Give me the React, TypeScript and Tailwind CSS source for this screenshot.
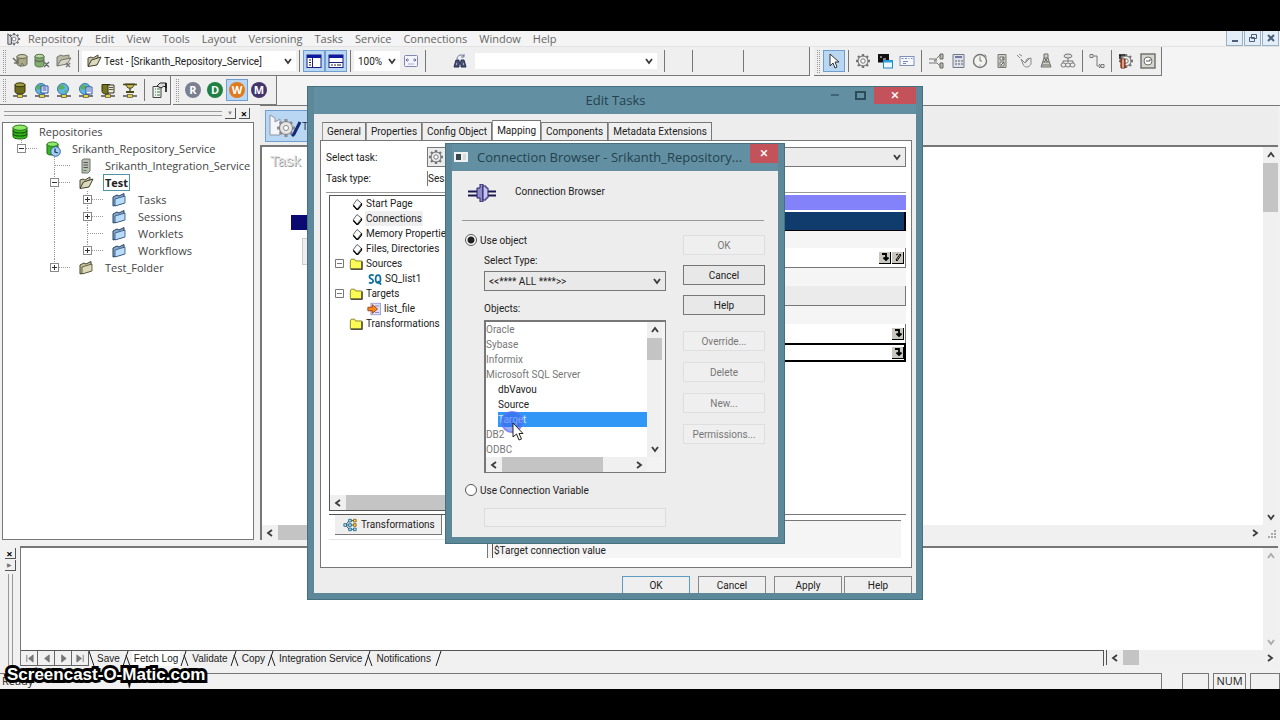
import React, { useState } from 'react';
import clsx from 'clsx';

const MENUS = ['Repository', 'Edit', 'View', 'Tools', 'Layout', 'Versioning', 'Tasks', 'Service', 'Connections', 'Window', 'Help'];

const TASK_TABS = ['General', 'Properties', 'Config Object', 'Mapping', 'Components', 'Metadata Extensions'];

const OUTPUT_TABS = ['Save', 'Fetch Log', 'Validate', 'Copy', 'Integration Service', 'Notifications'];

type Guide = 'line' | 'tee' | 'plus' | 'minus' | 'last-plus' | 'last-minus' | 'none';

const REPO_TREE: { label: string; icon: IconName; guides: Guide[]; current?: boolean }[] = [
    { label: 'Repositories', icon: 'db', guides: [] },
    { label: 'Srikanth_Repository_Service', icon: 'dbClock', guides: ['last-minus'] },
    { label: 'Srikanth_Integration_Service', icon: 'server', guides: ['none', 'tee'] },
    { label: 'Test', icon: 'folderOpen', guides: ['none', 'minus'], current: true },
    { label: 'Tasks', icon: 'folderBlue', guides: ['none', 'line', 'plus'] },
    { label: 'Sessions', icon: 'folderBlue', guides: ['none', 'line', 'plus'] },
    { label: 'Worklets', icon: 'folderBlue', guides: ['none', 'line', 'tee'] },
    { label: 'Workflows', icon: 'folderBlue', guides: ['none', 'line', 'last-plus'] },
    { label: 'Test_Folder', icon: 'folderTan', guides: ['none', 'last-plus'] }
];

const MAPPING_TREE: { label: string; icon: IconName; level: 'page' | 'folder' | 'child'; open?: boolean; current?: boolean }[] = [
    { label: 'Start Page', icon: 'page', level: 'page' },
    { label: 'Connections', icon: 'page', level: 'page', current: true },
    { label: 'Memory Properties', icon: 'page', level: 'page' },
    { label: 'Files, Directories', icon: 'page', level: 'page' },
    { label: 'Sources', icon: 'folderYellow', level: 'folder', open: true },
    { label: 'SQ_list1', icon: 'sq', level: 'child' },
    { label: 'Targets', icon: 'folderYellow', level: 'folder', open: true },
    { label: 'list_file', icon: 'target', level: 'child' },
    { label: 'Transformations', icon: 'folderYellow', level: 'folder' }
];

const OBJECTS = [
    { label: 'Oracle', group: true },
    { label: 'Sybase', group: true },
    { label: 'Informix', group: true },
    { label: 'Microsoft SQL Server', group: true },
    { label: 'dbVavou', group: false },
    { label: 'Source', group: false },
    { label: 'Target', group: false },
    { label: 'DB2', group: true },
    { label: 'ODBC', group: true }
];

const gear = (
    <>
        <path d="M8 1v3M8 12v3M1 8h3M12 8h3M3 3l2 2M11 11l2 2M13 3l-2 2M5 11l-2 2" stroke="#777" strokeWidth="2.4" />
        <circle cx="8" cy="8" r="5" fill="#eee" stroke="#6a6a6a" />
        <circle cx="8" cy="8" r="2.2" fill="#fff" stroke="#777" />
    </>
);

const netBase = (
    <>
        <path d="M1 14h14" stroke="#444" strokeWidth="1.4" />
        <rect x="5.5" y="12.5" width="5" height="3" fill="#e9d23a" stroke="#555" strokeWidth=".7" />
    </>
);

const globe = (
    <>
        <circle cx="7" cy="7" r="5.5" fill="#5fb6e0" stroke="#3a7698" />
        <path d="M3 4q3-2 5 0t-1 3-4 0zM8 9l3-1-1 3z" fill="#5fae5a" />
    </>
);

const ICONS = {
    app: <>{gear}<path d="M1 2l4 4v8H1z" fill="#ccd5e2" stroke="#444" /></>,
    db: (
        <>
            <path d="M1 3.5v9c0 1.5 3 2.5 7 2.5s7-1 7-2.5v-9" fill="#35b81c" stroke="#1f6414" />
            <path d="M1 6.5c0 1.5 3 2.5 7 2.5s7-1 7-2.5M1 9.5C1 11 4 12 8 12s7-1 7-2.5" stroke="#175010" strokeWidth="1.2" fill="none" />
            <ellipse cx="8" cy="3.7" rx="7" ry="2.6" fill="#8fe86a" stroke="#2a7a18" />
        </>
    ),
    dbClock: (
        <>
            <path d="M2 3v9c0 1.5 2 2 5 2s6-1 6-2V3" fill="#35b81c" stroke="#1f6414" />
            <ellipse cx="7.5" cy="3.2" rx="5.5" ry="2.2" fill="#8fe86a" stroke="#2a7a18" />
            <circle cx="10.5" cy="10.5" r="4.8" fill="#a9cdf0" stroke="#2b5c9b" />
            <path d="M10 7.5v3.5l3 1" stroke="#123a75" strokeWidth="1.3" fill="none" />
        </>
    ),
    server: (
        <>
            <path d="M4 2l2-1h6v12l-2 2H4z" fill="#b9bfb6" stroke="#70756d" />
            <path d="M5.5 4.5H10M5.5 7H10M5.5 9.5H10" stroke="#555" />
            <path d="M5.5 12.5h3" stroke="#3d8a3d" />
        </>
    ),
    folderOpen: (
        <>
            <path d="M2 13V5l3-1 2 1 5-3v4" fill="#c9c6a4" stroke="#4a4a3c" />
            <path d="M2 13.5L5.5 7 15 4l-4 8z" fill="#dedbbd" stroke="#3c3c30" />
        </>
    ),
    folderTan: (
        <>
            <path d="M2 14V5l4-2 2 1 5-2.5V11z" fill="#c4c19c" stroke="#45452f" />
            <path d="M4 14V7l10-3v7z" fill="#dcd9b8" stroke="#45452f" strokeWidth=".8" />
        </>
    ),
    folderBlue: (
        <>
            <path d="M2 14V5l4-2 2 1 5-2.5V11z" fill="#87a9cf" stroke="#24405f" />
            <path d="M4 14V7l10-3v7z" fill="#b9dcfa" stroke="#2c4c72" strokeWidth=".8" />
        </>
    ),
    folderYellow: (
        <>
            <path d="M1.5 13.5v-9l1-2h4l1 2h7v9z" fill="#fdfb55" stroke="#7d7a1c" />
            <path d="M15 5v9H2" stroke="#222" strokeWidth="1.2" fill="none" />
        </>
    ),
    page: (
        <>
            <path d="M8 2l6 5-6 8-5-6z" fill="#fff" stroke="#333" />
            <path d="M14 7v2.5L8.5 16 3 10" stroke="#000" strokeWidth="1.6" fill="none" />
        </>
    ),
    sq: (
        <>
            <path d="M6.5 4C3 2.5 1 4 2 6.5c1 1.5 4 1.5 4 4C5.5 13 3 13 1 12" stroke="#0d6d9c" strokeWidth="2" fill="none" />
            <ellipse cx="11.5" cy="8" rx="2.8" ry="4.5" stroke="#0d6d9c" strokeWidth="2" fill="none" />
            <path d="M11 10.5l4 4" stroke="#0d6d9c" strokeWidth="2" />
        </>
    ),
    target: (
        <>
            <rect x="4.5" y="1.5" width="11" height="13" fill="#dfe1f7" stroke="#9a9cd0" />
            <path d="M9 4.5h5M9 12h5" stroke="#8184c4" />
            <path d="M1 6h5V3l6 5-6 5v-3H1z" fill="#f58a1f" stroke="#a1390b" />
        </>
    ),
    dbArrow: (
        <>
            <path d="M5 3v8c0 1 2 2 5 2s5-1 5-2V3" fill="#a9ab87" stroke="#64664f" />
            <ellipse cx="10" cy="3.5" rx="5" ry="2" fill="#c8caa9" stroke="#64664f" />
            <path d="M1 5l5 5M6 6v4H2" stroke="#6f7164" strokeWidth="1.5" fill="none" />
            <path d="M8 14l2-4 2 2" stroke="#777" fill="none" />
        </>
    ),
    dbCut: (
        <>
            <path d="M1 3v9c0 1 2 2 4.5 2s4.5-1 4.5-2V3" fill="#7fae6a" stroke="#55714a" />
            <ellipse cx="5.5" cy="3.2" rx="4.5" ry="1.9" fill="#b7d8a6" stroke="#55714a" />
            <path d="M1 7c2 2 7 2 9 0M10 9l5 5M15 9l-5 5" stroke="#666" strokeWidth="1.3" fill="none" />
        </>
    ),
    folderCut: (
        <>
            <path d="M1 13V4l4-2 2 1 6-1v4" fill="#b9b9a6" stroke="#77776a" />
            <path d="M1 13l4-6 10-2-4 6z" fill="#d6d6c8" stroke="#77776a" />
            <path d="M10 10l4 4M14 10l-4 4" stroke="#777" strokeWidth="1.4" />
        </>
    ),
    paneLeft: (
        <>
            <rect x="1" y="2" width="14" height="12.5" fill="#fff" stroke="#1a1f8a" />
            <path d="M1 3.5h14" stroke="#101a9c" strokeWidth="3" />
            <path d="M6.5 5v9" stroke="#1a1f8a" />
            <path d="M3 7h2M3 9.5h2M3 12h2" stroke="#222" />
        </>
    ),
    paneBottom: (
        <>
            <rect x="1" y="2" width="14" height="12.5" fill="#fff" stroke="#1a1f8a" />
            <path d="M1 3.5h14" stroke="#101a9c" strokeWidth="3" />
            <path d="M1 9.5h14" stroke="#1a1f8a" />
            <path d="M3 12h2M6 12h2M9 12h4" stroke="#222" />
        </>
    ),
    fit: (
        <>
            <rect x="1.5" y="2.5" width="13" height="11" rx="1" fill="#f3f4fd" stroke="#8386ad" />
            <path d="M3 7h3M10 7h3M4.5 5.5L3 7l1.5 1.5M11.5 5.5L13 7l-1.5 1.5" stroke="#666a96" fill="none" />
            <path d="M5 11h6" stroke="#aaaed4" />
        </>
    ),
    find: (
        <>
            <path d="M5 6c0-4 5-5 7-3M12 1v3H9" stroke="#6d74a0" fill="none" />
            <path d="M4 7h3v2h2V7h3l2 7H9v-3H7v3H2z" fill="#4b5478" stroke="#222c50" />
            <path d="M4 11h1M11 11h1" stroke="#fff" />
        </>
    ),
    dbNet: (
        <>
            {netBase}
            <path d="M3 2.5v7C3 11 5 12 8 12s5-1 5-2.5v-7" fill="#6c6a1c" stroke="#35340f" />
            <ellipse cx="8" cy="2.8" rx="5" ry="2" fill="#a09d3d" stroke="#35340f" />
        </>
    ),
    globeDocs: <>{netBase}{globe}<path d="M7 4h7v7H7z" fill="#e8efff" stroke="#2c4fa5" /><path d="M8.5 6h4M8.5 8h4" stroke="#2c4fa5" /></>,
    globeNet: <>{netBase}{globe}</>,
    globeDoc: <>{netBase}{globe}<path d="M8 5h6v7H8z" fill="#fff" stroke="#2c4fa5" /><path d="M9 7h4M9 9h4" stroke="#3a62c4" /></>,
    dbDoc: (
        <>
            {netBase}
            <path d="M2 2.5v7C2 11 4 12 6 12s4-1 4-2.5v-7z" fill="#77741f" stroke="#35340f" />
            <path d="M8 3h6v8H8z" fill="#eee8c6" stroke="#333" />
            <path d="M9 5.5h4M9 7.5h4" stroke="#555" />
        </>
    ),
    flowNet: (
        <>
            {netBase}
            <path d="M3 2h10l-3 4H6z" fill="#cfc658" stroke="#4c4a1b" />
            <path d="M1 2.5h14M8 6v4" stroke="#4c4a1b" strokeWidth="1.4" />
            <path d="M4 10h8" stroke="#4c4a1b" strokeWidth="2" />
        </>
    ),
    propSheet: (
        <>
            <path d="M2 4.5h8v11H2z" fill="#f2f5ee" stroke="#444" />
            <path d="M4 7h1M6 7h3M4 10h1M6 10h3M4 13h1M6 13h3" stroke="#38724a" />
            <path d="M6 4l3-3h6v5l-2-2-3 2z" fill="#ddd" stroke="#222" />
            <path d="M15 1v9" stroke="#111" strokeWidth="1.6" />
        </>
    ),
    pointer: <path d="M4 1v12l3-3 2 5 2-1-2-5h4z" fill="#fff" stroke="#333" />,
    gear,
    command: (
        <>
            <rect x="1" y="1" width="11" height="8.5" fill="#111" />
            <path d="M3 4h2M6 6h3" stroke="#eee" />
            <rect x="6.5" y="7.5" width="9" height="7.5" fill="#eef8ff" stroke="#1e8ac7" />
            <path d="M6.5 8.5h9" stroke="#2ea0e0" strokeWidth="2" />
        </>
    ),
    email: (
        <>
            <rect x="1" y="3.5" width="14" height="9" fill="#f5f8ff" stroke="#7f8fb8" />
            <path d="M2.5 5.5h2M6 5.5h2M9.5 5.5h1M12 5.5h1.5M4 8.5h5M4 10.5h3" stroke="#7787b5" />
        </>
    ),
    decision: (
        <>
            <path d="M1 6h8l-3 2h3M1 10h8M9 5l3-3M9 10l3 3" stroke="#777" fill="none" />
            <path d="M12 1h3v5h-3zM12 10h3v5h-3z" fill="#b9bab0" stroke="#666" />
        </>
    ),
    calc: (
        <>
            <path d="M3 1.5h11v13H3z" fill="#dfe0e6" stroke="#75788c" />
            <path d="M5 4h7" stroke="#7378a5" strokeWidth="2" />
            <path d="M5 8h2M8 8h2M11 8h2M5 11h2M8 11h2M11 11h2" stroke="#85889c" strokeWidth="1.5" />
        </>
    ),
    clock: (
        <>
            <circle cx="8" cy="8" r="6.5" fill="#f3f3ee" stroke="#777" strokeWidth="1.4" />
            <path d="M8 3.5V8M8 8h2M12.5 1.5l2 2" stroke="#777" fill="none" />
            <circle cx="8" cy="12" r=".6" fill="#777" />
        </>
    ),
    device: (
        <>
            <path d="M4 1.5h8v13H4z" fill="#cfd0c9" stroke="#76786f" />
            <path d="M6 4h4v3H6zM6 9h4v4H6z" fill="#f2f2ee" stroke="#777" />
            <path d="M9 4v3M7 12l3-3" stroke="#555" />
        </>
    ),
    wait: (
        <>
            <path d="M1 2l3 3M3 1l3 2M5 6l2 5c1 4 6 4 8 0V5l-4 1-2 4z" fill="#ecece6" stroke="#888" />
            <path d="M9 10l4-4" stroke="#888" />
        </>
    ),
    tower: (
        <>
            <path d="M6 1h4v4H6zM6 5L3 14h10l-3-9" fill="#cfcfc8" stroke="#6e6e6a" />
            <path d="M5 9h6M4 12h8M6 5l4 4M10 5L6 9" stroke="#6e6e6a" />
        </>
    ),
    links: (
        <>
            <ellipse cx="8" cy="3" rx="4" ry="2" fill="#ddd" stroke="#777" />
            <path d="M8 5v4M3 10V8h10v2" stroke="#777" fill="none" />
            <ellipse cx="3.5" cy="12" rx="2.5" ry="2" fill="#eee" stroke="#777" />
            <ellipse cx="8" cy="12" rx="2.5" ry="2" fill="#eee" stroke="#777" />
            <ellipse cx="12.5" cy="12" rx="2.5" ry="2" fill="#eee" stroke="#777" />
        </>
    ),
    connect: (
        <>
            <path d="M1 1.5h3v3H1zM12 11.5h3v3h-3zM4 3h4v10h4" fill="none" stroke="#777" />
            <path d="M10 11l2 2-2 2" stroke="#777" fill="none" />
        </>
    ),
    taskTool: (
        <>
            {gear}
            <path d="M1 2h6M2 2v4" stroke="#111" strokeWidth="1.6" />
            <path d="M3 6h4v9H3z" fill="#d65f3a" stroke="#5e1f0c" />
            <path d="M5 6v9" stroke="#f0dcc8" />
        </>
    ),
    monitor: (
        <>
            <rect x="1" y="1" width="14" height="14" fill="#d5d5cf" stroke="#6c6c68" strokeWidth="1.4" />
            <circle cx="8" cy="8" r="4" fill="#fff" stroke="#6c6c68" />
            <path d="M6 8h4V6" stroke="#555" fill="none" />
        </>
    ),
    nodes: (
        <>
            <path d="M3 8l4-5M3 8h5M3 8l4 5M8 3h5M8 8h5M8 13h4" stroke="#333" />
            <path d="M1 6.5h3v3H1zM6.5 1.5h3v3h-3zM6.5 6.5h3v3h-3zM6.5 11.5h3v3h-3zM12 11.5h3v3h-3z" fill="#bfe4f5" stroke="#17678f" />
            <path d="M12 1.5h3v3h-3zM12 6.5h3v3h-3z" fill="#ffd84a" stroke="#8a6510" />
        </>
    )
};

type IconName = keyof typeof ICONS;

function Icon({ name, className = 'size-4' }: { name: IconName; className?: string }) {
    return (
        <svg viewBox="0 0 16 16" fill="none" aria-hidden="true" className={clsx('shrink-0', className)}>
            {ICONS[name]}
        </svg>
    );
}

const CHEVRONS = {
    up: 'M1 6l3-4 3 4',
    down: 'M1 2l3 4 3-4',
    left: 'M6 1L2 4l4 3',
    right: 'M2 1l4 3-4 3'
};

function Chevron({ dir, className = 'text-[#3c3c3c]' }: { dir: keyof typeof CHEVRONS; className?: string }) {
    return (
        <svg viewBox="0 0 8 8" aria-hidden="true" className={clsx('size-2 shrink-0', className)}>
            <path d={CHEVRONS[dir]} fill="none" stroke="currentColor" strokeWidth="1.8" />
        </svg>
    );
}

function ToolButton({ icon, active, label }: { icon: IconName; active?: boolean; label: string }) {
    return (
        <button
            type="button"
            aria-label={label}
            className={clsx('flex h-[22px] w-[22px] shrink-0 items-center justify-center border', active ? 'border-[#6f9fd0] bg-[#b9d6f3]' : 'border-transparent')}
        >
            <Icon name={icon} />
        </button>
    );
}

const Gripper = () => <div className="mx-[3px] h-[23px] w-[3px] shrink-0 border-x border-dotted border-[#999]" />;

const Separator = () => <div className="mx-[3px] h-[22px] w-px shrink-0 bg-[#777]" />;

function Toolbar({ children }: { children: React.ReactNode }) {
    return <div className="flex h-[29px] items-center border-r border-b border-[#777] bg-[#efefef]">{children}</div>;
}

function DropDown({ label, id, children, className, boxClass }: { label: string; id?: string; children: React.ReactNode; className?: string; boxClass?: string }) {
    return (
        <div className={clsx('grid items-center', boxClass)}>
            <select id={id} aria-label={label} className={clsx('col-start-1 row-start-1 h-full w-full appearance-none outline-none', className)}>
                {children}
            </select>
            <Chevron dir="down" className="pointer-events-none col-start-1 row-start-1 mr-1 justify-self-end text-[#3c3c3c]" />
        </div>
    );
}

function ScrollY({ className, thumb, arrow }: { className?: string; thumb?: string; arrow?: string }) {
    return (
        <div className={clsx('flex w-[15px] shrink-0 flex-col items-center bg-[#f0f0f0] py-1', className)}>
            <Chevron dir="up" className={arrow} />
            <div className="mt-1 flex w-full flex-1 flex-col">{thumb && <div className={clsx('w-full bg-[#c4c4c4]', thumb)} />}</div>
            <Chevron dir="down" className={arrow} />
        </div>
    );
}

function ScrollX({ className, thumb }: { className?: string; thumb?: string }) {
    return (
        <div className={clsx('flex h-[15px] shrink-0 items-center bg-[#f0f0f0] px-1', className)}>
            <Chevron dir="left" />
            <div className="ml-1 flex h-full flex-1">{thumb && <div className={clsx('h-full bg-[#c4c4c4]', thumb)} />}</div>
            <Chevron dir="right" />
        </div>
    );
}

function TreeGuide({ kind }: { kind: Guide }) {
    const last = kind.startsWith('last');
    const box = kind.endsWith('plus') || kind.endsWith('minus');
    return (
        <svg viewBox="0 0 33 17" aria-hidden="true" className="h-[17px] w-[33px] shrink-0">
            {kind !== 'none' && <path d={last ? 'M16.5 0v8' : 'M16.5 0v17'} stroke="#999" strokeDasharray="1 1" />}
            {kind !== 'none' && kind !== 'line' && <path d="M17 8.5h17" stroke="#999" strokeDasharray="1 1" />}
            {box && <rect x="12.5" y="4.5" width="8" height="8" fill="#fff" stroke="#8a8a8a" />}
            {box && <path d={kind.endsWith('plus') ? 'M14 8.5h5M16.5 6v5' : 'M14 8.5h5'} stroke="#333" />}
        </svg>
    );
}

function RepositoryPane() {
    return (
        <aside className="flex w-[255px] shrink-0 flex-col pr-px pl-0.5">
            <div className="flex h-[17px] items-center gap-[3px] pr-1 pl-0.5">
                <div className="h-[5px] flex-1 border-y border-[#9a9a9a]" />
                <button type="button" aria-label="Pane menu" className="flex size-[11px] items-center justify-center border-r border-b border-[#555] bg-[#f0f0f0] text-[6px] text-[#888]">▼</button>
                <button type="button" aria-label="Close pane" className="flex size-[11px] items-center justify-center border-r border-b border-[#555] bg-[#f0f0f0] text-[11px] leading-none font-bold text-black">×</button>
            </div>
            <ul className="flex-1 border border-[#777] bg-white pl-0.5">
                {REPO_TREE.map((node) => (
                    <li key={node.label} className="flex h-[17px] items-center">
                        {node.guides.map((g, i) => (
                            <TreeGuide key={i} kind={g} />
                        ))}
                        <Icon name={node.icon} className="mr-[9px] ml-[7px] size-4" />
                        <span className={clsx('border px-px leading-[15px] whitespace-nowrap', node.current ? 'border-[#4f93a8] font-bold text-[#222]' : 'border-transparent')}>{node.label}</span>
                    </li>
                ))}
            </ul>
        </aside>
    );
}

function Workspace() {
    return (
        <main className="ml-[5px] flex min-w-0 flex-1 flex-col border-t border-[#777] pr-0.5">
            <div className="flex h-[39px] items-center bg-[#ededed] px-[5px]">
                <div className="flex h-8 w-[110px] items-center border border-[#6f9fd0] bg-[#b9d6f3]">
                    <svg viewBox="0 0 36 30" fill="none" aria-hidden="true" className="h-[30px] w-9">
                        <path d="M4 4l5 3v4l5-3v16H4z" fill="#f4f6fa" stroke="#8d97a8" />
                        <path d="M20 8v4M20 22v4M11 17h4M25 17h4M14 11l3 3M23 20l3 3M26 11l-3 3M14 23l3-3" stroke="#8b8b8b" strokeWidth="3" />
                        <circle cx="20" cy="17" r="6.5" fill="#e4e4e4" stroke="#7d7d7d" />
                        <circle cx="20" cy="17" r="2.5" fill="#fff" stroke="#8b8b8b" />
                        <path d="M34 11l-6 12-2 2" stroke="#152a7a" strokeWidth="3" />
                    </svg>
                    <span className="text-[#1c2b50]">Task</span>
                </div>
            </div>
            <div className="flex flex-1 flex-col border-t-2 border-l-2 border-[#777] bg-white">
                <div className="flex flex-1">
                    <div className="flex-1 pl-2">
                        <div className="font-['Liberation_Sans'] text-[15px] leading-7 text-[#e4e4e4] [text-shadow:1px_1px_0_#999]">Task</div>
                        <div className="mt-10 ml-[21px] h-[15px] w-20 bg-[#0a0a70]" />
                        <div className="mt-2 ml-8 h-[27px] w-20 border border-[#ccc] bg-[#eee]" />
                    </div>
                    <ScrollY thumb="h-[49px]" />
                </div>
                <div className="flex bg-[#f0f0f0]">
                    <ScrollX className="flex-1" thumb="w-1/2" />
                    <svg viewBox="0 0 15 15" aria-hidden="true" className="size-[15px]">
                        <path d="M5 12h2M8 12h2M11 12h2M8 9h2M11 9h2M11 6h2" stroke="#aaa" strokeWidth="2" />
                    </svg>
                </div>
            </div>
        </main>
    );
}

const NAV_ARROWS = [
    { label: 'First', d: 'M2 1v8M9 1L4 5l5 4z' },
    { label: 'Previous', d: 'M8 1L3 5l5 4z' },
    { label: 'Next', d: 'M3 1l5 4-5 4z' },
    { label: 'Last', d: 'M1 1l5 4-5 4zM8 1v8' }
];

function TabSlant({ d }: { d: string }) {
    return (
        <svg viewBox="0 0 10 15" aria-hidden="true" className="h-[15px] w-2.5 shrink-0">
            <path d={d} fill="none" stroke="#222" />
        </svg>
    );
}

function OutputPane() {
    const [tab, setTab] = useState('Fetch Log');
    return (
        <section className="mt-1 flex h-[122px] shrink-0 pr-0.5">
            <div className="flex w-5 shrink-0 flex-col items-center gap-px pt-1">
                <button type="button" aria-label="Close output" className="flex size-[11px] items-center justify-center border-r border-b border-[#555] text-[11px] leading-none font-bold text-black">×</button>
                <button type="button" aria-label="Expand output" className="flex size-[11px] items-center justify-center border-r border-b border-[#555] text-[6px] text-[#777]">▶</button>
                <div className="mt-0.5 w-[5px] flex-1 border-x border-[#9a9a9a]" />
            </div>
            <div className="mt-0.5 flex min-w-0 flex-1 flex-col border-t-2 border-l border-[#777]">
                <div className="flex flex-1 bg-white">
                    <div className="flex-1" />
                    <ScrollY arrow="text-[#aaa]" />
                </div>
                <div className="flex h-4">
                    <div className="flex min-w-0 flex-1 border-t border-r border-[#555]">
                        {NAV_ARROWS.map((nav) => (
                            <button key={nav.label} type="button" aria-label={nav.label} className="flex w-[17px] items-center justify-center border-r border-b border-[#666]">
                                <svg viewBox="0 0 10 10" className="size-[9px]">
                                    <path d={nav.d} fill="#777" stroke="#777" />
                                </svg>
                            </button>
                        ))}
                        <svg viewBox="0 0 6 15" aria-hidden="true" className="h-[15px] w-1.5 shrink-0">
                            <path d="M0 0l5 15" stroke="#222" />
                        </svg>
                        {OUTPUT_TABS.map((name) => (
                            <React.Fragment key={name}>
                                <button
                                    type="button"
                                    onClick={() => setTab(name)}
                                    className={clsx("px-0.5 font-['Liberation_Sans'] text-[10px] leading-[15px] whitespace-nowrap text-[#222]", tab === name ? 'bg-white' : 'bg-[#efefef]')}
                                >
                                    {name}
                                </button>
                                <TabSlant d={name === 'Notifications' ? 'M8 0L3 15' : 'M6 0L1 15M4 4l4 11'} />
                            </React.Fragment>
                        ))}
                    </div>
                    <ScrollX className="ml-0.5 w-[172px] border-l border-[#555]" thumb="w-4" />
                </div>
            </div>
        </section>
    );
}

function StatusBar() {
    return (
        <footer className="mt-[7px] flex h-4 shrink-0 gap-1 text-[#222]">
            <div className="flex-1 border-t border-r border-[#777] pl-0.5 leading-[14px]">Ready</div>
            <div className="ml-4 w-[27px] border border-b-0 border-[#777]" />
            <div className="w-[33px] border border-b-0 border-[#777] text-center leading-[14px]">NUM</div>
            <div className="w-[30px] border border-b-0 border-[#777]" />
        </footer>
    );
}

function GridButton({ kind }: { kind: 'open' | 'edit' }) {
    return (
        <button type="button" aria-label={kind === 'open' ? 'Open connection browser' : 'Edit value'} className="flex size-3 items-center justify-center border-r border-b border-black bg-[#c9c7be]">
            <svg viewBox="0 0 10 10" className="size-2.5">
                <path d={kind === 'open' ? 'M2 2h4v5M3.5 5.5L6 8l2.5-2.5' : 'M3 8l4-6 1 1-4 6zM3 3l2-1'} fill="none" stroke="#000" strokeWidth={kind === 'open' ? 1.8 : 1} />
            </svg>
        </button>
    );
}

function MappingTree() {
    return (
        <div className="flex h-[316px] w-[250px] flex-col border border-[#555] bg-white">
            <ul className="flex-1">
                {MAPPING_TREE.map((node) => (
                    <li key={node.label} className={clsx('flex h-[15px] items-center', node.level === 'child' ? 'pl-[37px]' : 'pl-[3px]')}>
                        {node.level !== 'child' && (
                            <span className="mr-1 flex w-3 justify-center">
                                {node.open && (
                                    <svg viewBox="0 0 9 9" className="size-[9px]">
                                        <path d="M.5.5h8v8h-8zM2 4.5h5" fill="#fff" stroke="#777" />
                                    </svg>
                                )}
                            </span>
                        )}
                        <Icon name={node.icon} className={clsx('mr-0.5', node.level === 'page' ? 'ml-0.5 size-3' : 'size-3.5', node.icon === 'sq' && 'ml-px')} />
                        <span className={clsx('px-px whitespace-nowrap text-[#222]', node.current && 'bg-[#efefef]')}>{node.label}</span>
                    </li>
                ))}
            </ul>
            <ScrollX thumb="w-2/3" />
        </div>
    );
}

function EditTasksDialog() {
    const [tab, setTab] = useState('Mapping');
    return (
        <div role="dialog" aria-label="Edit Tasks" className="absolute top-[86px] left-[307px] flex h-[514px] w-[616px] flex-col border-x-[7px] border-b-[7px] border-[#5c8899] bg-[#ededed] font-['Roboto'] text-[10px] outline outline-[#45707f] -outline-offset-1">
            <div className="flex h-7 shrink-0 items-start bg-[#628fa2] text-[#24424e]">
                <span className="w-[86px]" />
                <h2 className="flex-1 text-center font-['Open_Sans'] text-[13px] leading-7">Edit Tasks</h2>
                <div className="flex items-center">
                    <button type="button" aria-label="Minimize" className="mr-4 h-[2px] w-2 bg-[#3c6575]" />
                    <button type="button" aria-label="Maximize" className="mr-2 h-[9px] w-[11px] border-2 border-[#2d4c58]" />
                    <button type="button" aria-label="Close" className="h-[18px] w-[42px] bg-[#c4525b] text-[15px] leading-[18px] text-white">×</button>
                </div>
            </div>
            <div className="flex flex-1 flex-col pr-1 pl-1.5 text-[#222]">
                <div className="flex h-[26px] shrink-0 items-end pl-0.5" role="tablist">
                    {TASK_TABS.map((name) => (
                        <button
                            key={name}
                            type="button"
                            role="tab"
                            aria-selected={tab === name}
                            onClick={() => setTab(name)}
                            className={clsx('border border-b-0 border-l-[#999] border-[#777] px-1 leading-[17px] whitespace-nowrap', tab === name ? 'h-5 bg-white' : 'h-[18px] bg-[#efefef]')}
                        >
                            {name}
                        </button>
                    ))}
                </div>
                <div className="flex h-[428px] shrink-0 flex-col border border-[#777] bg-white px-[5px]">
                    <div className="mt-[5px] flex h-[22px] items-center">
                        <label htmlFor="task" className="w-[101px]">Select task:</label>
                        <div className="flex h-5 flex-1 items-center border border-[#777] bg-[#ececec]">
                            <Icon name="gear" />
                            <DropDown id="task" label="Select task" boxClass="h-full flex-1">
                                <option value="session" />
                            </DropDown>
                        </div>
                    </div>
                    <div className="flex h-5 items-center">
                        <span className="w-[101px]">Task type:</span>
                        <span className="border-l border-[#777]">Session</span>
                    </div>
                    <div className="mt-1 mb-0.5 h-px shrink-0 bg-[#999]" />
                    <div className="flex gap-2">
                        <div className="pl-[3px]">
                            <MappingTree />
                            <div className="mt-[3px] h-[26px] border-t border-b border-t-[#555] border-b-[#e5e5e5] pl-1.5">
                                <button type="button" className="flex h-5 items-center gap-1 border-r border-b border-[#777] bg-[#efefef] pr-1.5 pl-2">
                                    <Icon name="nodes" className="size-3.5" />
                                    Transformations
                                </button>
                            </div>
                        </div>
                        <div className="flex h-[320px] min-w-0 flex-1 flex-col border-b border-[#777]">
                            <div className="h-[15px] bg-[#8482fb]" />
                            <div className="mt-0.5 h-[19px] border-r-2 border-b border-black bg-[#0f3c6c]" />
                            <div className="h-[17px] bg-[#f5f5f5]" />
                            <div className="flex h-5 items-center justify-end gap-px border-r border-b border-[#777] pr-px">
                                <GridButton kind="open" />
                                <GridButton kind="edit" />
                            </div>
                            <div className="h-[18px] bg-[#f5f5f5]" />
                            <div className="h-5 border-r border-b border-[#777] bg-[#ebebeb]" />
                            <div className="h-[18px] bg-[#f5f5f5]" />
                            <div className="flex h-[19px] items-center justify-end border-r border-[#777] pr-px">
                                <GridButton kind="open" />
                            </div>
                            <div className="flex h-[19px] items-center justify-end border-2 border-l-0 border-black">
                                <GridButton kind="open" />
                            </div>
                        </div>
                    </div>
                    <div className="-mt-5 mr-[5px] ml-[161px] flex h-[38px] items-end border-t border-l border-[#777] bg-[#f5f5f5] pl-1">
                        <span className="border-l border-[#555] pl-px leading-[14px]">$Target connection value</span>
                    </div>
                </div>
                <div className="mt-2 flex flex-1 justify-end gap-0.5 overflow-hidden">
                    <div className="flex gap-2">
                        {['OK', 'Cancel', 'Apply'].map((name) => (
                            <button key={name} type="button" className={clsx('h-full w-[68px] border border-b-0 bg-[#efefef]', name === 'OK' ? 'border-[#5b9bc4]' : 'border-[#888]')}>
                                {name}
                            </button>
                        ))}
                    </div>
                    <button type="button" className="h-full w-[68px] border border-b-0 border-[#888] bg-[#efefef]">Help</button>
                </div>
            </div>
        </div>
    );
}

function SideButton({ name, disabled }: { name: string; disabled?: boolean }) {
    return (
        <button type="button" disabled={disabled} className={clsx('h-5 w-[82px] border', disabled ? 'border-[#dedede] bg-[#efefef] text-[#777]' : 'border-[#777] bg-[#e8e8e8] text-[#222]')}>
            {name}
        </button>
    );
}

function ConnectionBrowser() {
    const [mode, setMode] = useState('object');
    const [picked, setPicked] = useState('Target');
    return (
        <div role="dialog" aria-label="Connection Browser" className="absolute top-[143px] left-[445px] flex h-[401px] w-[340px] flex-col border-x-[7px] border-b-[7px] border-[#5c8899] bg-[#ededed] font-['Roboto'] text-[10px] text-[#222] outline outline-[#45707f] -outline-offset-1">
            <div className="flex h-7 shrink-0 items-start bg-[#628fa2] pl-0.5">
                <svg viewBox="0 0 14 10" aria-hidden="true" className="mt-[9px] h-2.5 w-3.5">
                    <path d="M0 0h14v10H0z" fill="#eef1f2" />
                    <path d="M2 2h5v6H2z" fill="#39484f" />
                    <path d="M9 2h3v6H9z" fill="#d5dadd" />
                </svg>
                <h2 className="ml-[9px] flex-1 truncate font-['Open_Sans'] text-[13px] leading-7 text-[#24424e]">Connection Browser - Srikanth_Repository...</h2>
                <button type="button" aria-label="Close" className="h-5 w-7 bg-[#c4525b] text-[15px] leading-5 text-white">×</button>
            </div>
            <div className="mr-[14px] ml-2.5 flex h-[50px] shrink-0 items-start border-b border-[#999] pt-[13px] pl-1.5">
                <svg viewBox="0 0 28 18" aria-hidden="true" className="h-[18px] w-7">
                    <path d="M0 7.5h9M0 11.5h9M19 7.5h9M19 11.5h9" stroke="#1d1850" strokeWidth="2" />
                    <path d="M9 4h3V0h3v18h-3v-4H9z" fill="#8f8cc9" stroke="#25206b" />
                    <path d="M15 2h3v2h2v10h-2v2h-3z" fill="#c5c3ec" stroke="#25206b" />
                </svg>
                <span className="ml-[19px]">Connection Browser</span>
            </div>
            <div className="flex pr-[13px] pl-[13px]">
                <div className="w-[201px]">
                    <label className="mt-[11px] flex h-4 items-center gap-[3px]">
                        <input type="radio" name="mode" checked={mode === 'object'} onChange={() => setMode('object')} className="size-3 appearance-none rounded-full border border-[#555] bg-white checked:bg-[radial-gradient(#222_0_3px,#fff_4px)]" />
                        Use object
                    </label>
                    <div className="pl-[19px]">
                        <label htmlFor="type" className="mt-[5px] block h-4">Select Type:</label>
                        <div className="mt-0.5 border border-[#777] bg-[#e9e9e9]">
                            <DropDown id="type" label="Select Type" boxClass="h-[18px]" className="pl-1">
                                <option>{'<<**** ALL ****>>'}</option>
                            </DropDown>
                        </div>
                        <div className="mt-2.5 h-4" id="objects">Objects:</div>
                        <div className="mt-[3px] flex h-[153px] flex-col border border-t-2 border-l-2 border-[#777] bg-[#f3f3f3] pr-[3px]">
                            <div className="flex flex-1 bg-white">
                                <ul role="listbox" aria-labelledby="objects" className="flex-1">
                                    {OBJECTS.map((o) => (
                                        <li
                                            key={o.label}
                                            role="option"
                                            aria-selected={picked === o.label}
                                            onClick={() => !o.group && setPicked(o.label)}
                                            className={clsx(
                                                'h-[15px] leading-[15px]',
                                                o.group ? 'text-[#777]' : 'ml-3',
                                                picked === o.label && 'bg-[#3197f7] text-[#cfe6ff]',
                                                !o.group && picked !== o.label && 'text-[#222]'
                                            )}
                                        >
                                            {o.label}
                                        </li>
                                    ))}
                                </ul>
                                <ScrollY thumb="h-[22px]" />
                            </div>
                            <ScrollX className="mr-[15px]" thumb="w-[101px]" />
                        </div>
                    </div>
                    <label className="mt-[9px] flex h-4 items-center gap-[3px]">
                        <input type="radio" name="mode" checked={mode === 'variable'} onChange={() => setMode('variable')} className="size-3 appearance-none rounded-full border border-[#555] bg-white checked:bg-[radial-gradient(#222_0_3px,#fff_4px)]" />
                        Use Connection Variable
                    </label>
                    <div className="mt-2.5 pl-[19px]">
                        <input aria-label="Connection variable" disabled className="block h-[19px] w-full border border-[#dcdcdc] bg-[#efefef]" />
                    </div>
                </div>
                <div className="mt-[14px] ml-[17px] flex flex-col gap-2.5">
                    <SideButton name="OK" disabled />
                    <SideButton name="Cancel" />
                    <SideButton name="Help" />
                    <div className="mt-1.5 flex flex-col gap-[11px]">
                        <SideButton name="Override..." disabled />
                        <SideButton name="Delete" disabled />
                        <SideButton name="New..." disabled />
                        <SideButton name="Permissions..." disabled />
                    </div>
                </div>
            </div>
        </div>
    );
}

const MODE_BUTTONS = [
    { letter: 'R', color: 'bg-[#7b7f92]' },
    { letter: 'D', color: 'bg-[#1f8045]' },
    { letter: 'W', color: 'bg-[#e07a1c]', active: true },
    { letter: 'M', color: 'bg-[#43356b]' }
];

const WINDOW_BUTTONS = [
    { label: 'Minimize', d: 'M2 8h6' },
    { label: 'Restore', d: 'M3.5 1.5h5v4h-5zM1.5 4.5h5v4h-5z' },
    { label: 'Close', d: 'M2 2l6 6M8 2L2 8' }
];

export default function App() {
    return (
        <div className="relative flex min-h-screen flex-col overflow-hidden bg-black py-[31px] font-['Open_Sans','Noto_Sans',sans-serif] text-[11px] leading-[15px] text-[#444]">
            <div className="flex flex-1 flex-col bg-[#f1f1f1]">
                <header className="shrink-0 bg-[#f4f4f4]">
                    <div className="flex h-4 items-center border-b border-[#e2e2e2] pl-[7px]">
                        <Icon name="app" className="size-3.5" />
                        <nav className="ml-[7px] flex flex-1 gap-3 leading-[14px] text-[#666]">
                            {MENUS.map((m) => (
                                <button key={m} type="button">{m}</button>
                            ))}
                        </nav>
                        <div className="flex gap-px pr-px">
                            {WINDOW_BUTTONS.map((b) => (
                                <button key={b.label} type="button" aria-label={b.label} className="flex h-[15px] w-[17px] items-center justify-center border-x border-b border-[#9ab0c4] bg-[#e4eef8]">
                                    <svg viewBox="0 0 10 10" className="size-2.5">
                                        <path d={b.d} fill="none" stroke="#4d5f78" strokeWidth={b.label === 'Restore' ? 1 : 2} />
                                    </svg>
                                </button>
                            ))}
                        </div>
                    </div>
                    <div className="flex gap-1">
                        <Toolbar>
                            <Gripper />
                            <ToolButton icon="dbArrow" label="Connect" />
                            <ToolButton icon="dbCut" label="Disconnect" />
                            <ToolButton icon="folderCut" label="Close folder" />
                            <Separator />
                            <div className="flex h-5 w-[214px] items-center bg-white pl-1">
                                <Icon name="folderOpen" />
                                <DropDown label="Folder" boxClass="h-full flex-1" className="pl-0.5 font-['Roboto'] text-[10px] text-[#222]">
                                    <option>Test - [Srikanth_Repository_Service]</option>
                                </DropDown>
                            </div>
                            <Separator />
                            <ToolButton icon="paneLeft" label="Navigator" active />
                            <ToolButton icon="paneBottom" label="Output" active />
                            <Separator />
                            <DropDown label="Zoom" boxClass="h-5 w-[46px] bg-white" className="pl-1 font-['Roboto'] text-[10px] text-[#222]">
                                <option>100%</option>
                            </DropDown>
                            <ToolButton icon="fit" label="Fit" />
                            <Separator />
                            <div className="w-5" />
                            <ToolButton icon="find" label="Find" />
                            <DropDown label="Find text" boxClass="ml-1 h-4 w-[182px] bg-white">
                                <option value="" />
                            </DropDown>
                            <div className="flex">
                                <div className="ml-1"><Separator /></div>
                                <div className="ml-[21px]"><Separator /></div>
                                <div className="mr-[62px] ml-11"><Separator /></div>
                            </div>
                        </Toolbar>
                        <Toolbar>
                            <Gripper />
                            <ToolButton icon="pointer" label="Select" active />
                            <Separator />
                            <ToolButton icon="gear" label="Session" />
                            <ToolButton icon="command" label="Command" />
                            <ToolButton icon="email" label="Email" />
                            <Separator />
                            <ToolButton icon="decision" label="Decision" />
                            <ToolButton icon="calc" label="Assignment" />
                            <ToolButton icon="clock" label="Timer" />
                            <ToolButton icon="device" label="Control" />
                            <ToolButton icon="wait" label="Event wait" />
                            <ToolButton icon="tower" label="Event raise" />
                            <ToolButton icon="links" label="Worklet" />
                            <Separator />
                            <ToolButton icon="connect" label="Link tasks" />
                            <Separator />
                            <ToolButton icon="taskTool" label="Task developer" />
                            <ToolButton icon="monitor" label="Monitor" />
                            <div className="w-0.5" />
                        </Toolbar>
                    </div>
                    <div className="flex gap-0.5">
                        <Toolbar>
                            <Gripper />
                            <ToolButton icon="dbNet" label="Source" />
                            <ToolButton icon="globeDocs" label="Copy mapping" />
                            <ToolButton icon="globeNet" label="Network" />
                            <ToolButton icon="globeDoc" label="Document" />
                            <ToolButton icon="dbDoc" label="Report" />
                            <ToolButton icon="flowNet" label="Flow" />
                            <Separator />
                            <ToolButton icon="propSheet" label="Properties" />
                        </Toolbar>
                        <Toolbar>
                            <Gripper />
                            {MODE_BUTTONS.map((b) => (
                                <button key={b.letter} type="button" className={clsx('flex size-[22px] items-center justify-center border', b.active ? 'border-[#6f9fd0] bg-[#b9d6f3]' : 'border-transparent')}>
                                    <span className={clsx('size-4 rounded-full text-center text-[11px] leading-4 font-bold text-white', b.color)}>{b.letter}</span>
                                </button>
                            ))}
                            <div className="w-1.5" />
                        </Toolbar>
                    </div>
                </header>
                <div className="flex flex-1">
                    <RepositoryPane />
                    <Workspace />
                </div>
                <OutputPane />
                <StatusBar />
            </div>
            <EditTasksDialog />
            <ConnectionBrowser />
            <div className="absolute top-[411px] left-[501px] size-[22px] rounded-full border-2 border-[#6f6ff0]/50 bg-[#3a5cf0]/50" />
            <svg viewBox="0 0 12 19" aria-hidden="true" className="absolute top-[422px] left-[512px] h-[19px] w-3">
                <path d="M1 1v14l3.5-3 2.5 6 2.5-1-2.5-5.5h4z" fill="#fff" stroke="#222" />
            </svg>
            <div className="absolute bottom-[35px] left-[7px] font-['Liberation_Sans'] text-[17px] leading-5 font-bold text-white [-webkit-text-stroke:6px_#000] [paint-order:stroke_fill]">Screencast-O-Matic.com</div>
        </div>
    );
}
